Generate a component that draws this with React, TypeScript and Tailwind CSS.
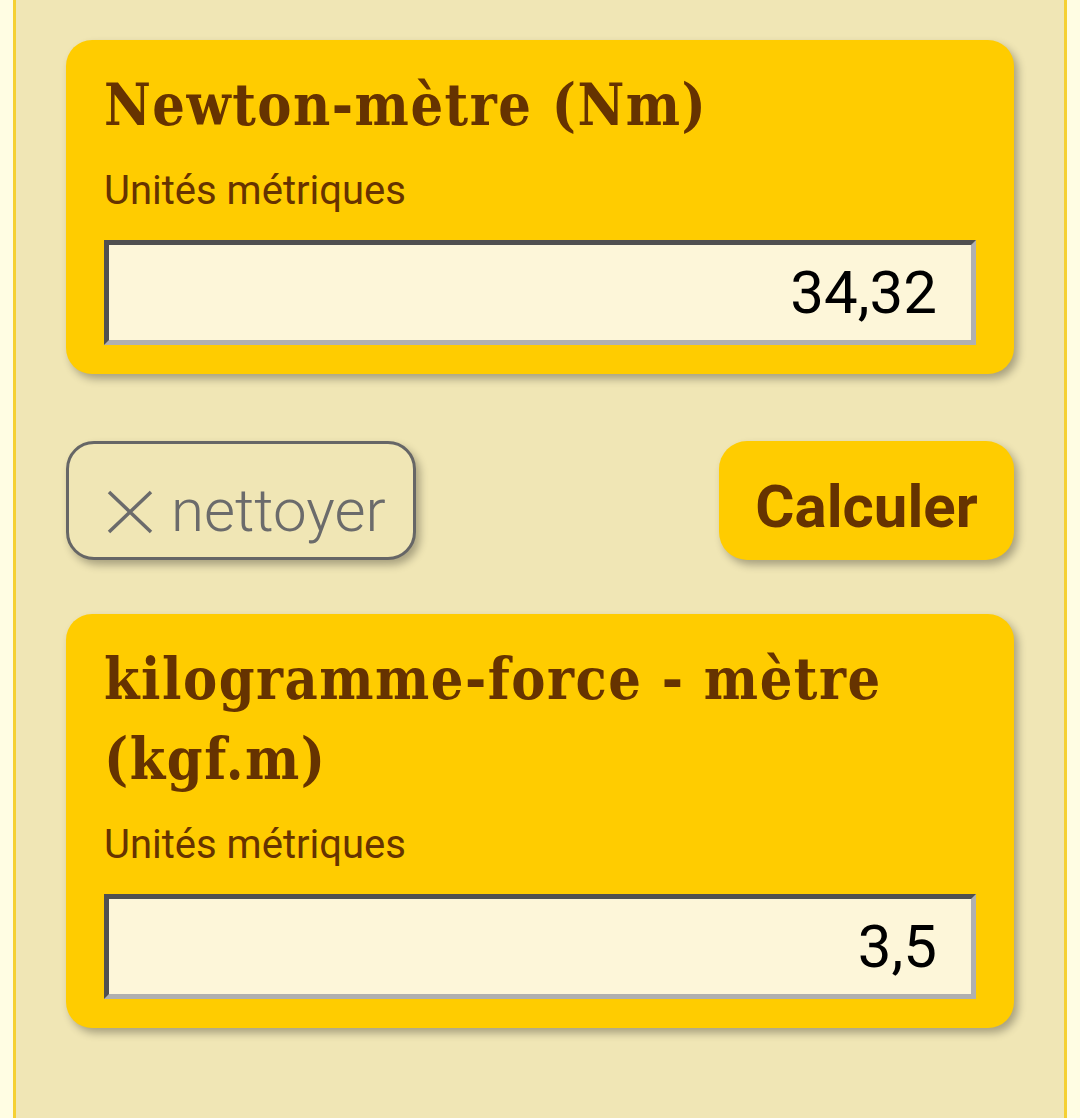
import React from "react";

const serif = { fontFamily: '"DejaVu Serif Condensed", "DejaVu Serif", serif' };
const roboto = { fontFamily: 'Roboto, "Liberation Sans", sans-serif' };

function Card({ title, value }: { title: React.ReactNode; value: string }) {
  return (
    <div className="rounded-[26px] bg-[#ffcc00] px-[38px] pt-[25px] pb-[29px] shadow-[4px_5px_8px_rgba(0,0,0,0.3)]">
      <h2 className="text-[57px] font-bold leading-[80px] tracking-[1.5px] text-[#663300]" style={serif}>
        {title}
      </h2>
      <div className="mt-[23px] text-[40px] leading-[46px] text-[#663300]" style={roboto}>
        Unités métriques
      </div>
      <div className="mt-[26px] flex h-[105px] items-center justify-end border-[5px] border-t-[#505050] border-l-[#505050] border-b-[#b0b0b0] border-r-[#b0b0b0] bg-[#fdf6d9] pr-[34px]">
        <span className="text-[60px] leading-none text-black" style={roboto}>
          {value}
        </span>
      </div>
    </div>
  );
}

export default function App() {
  return (
    <div className="min-h-[1118px] bg-[#fffde3]">
      <div className="ml-[13px] min-h-[1118px] w-[1054px] border-x-[3px] border-[#f5d033] bg-[#f0e6b5] px-[50px] pt-[40px]">
        <Card title="Newton-mètre (Nm)" value="34,32" />
        <div className="mt-[67px] flex items-center justify-between">
          <button className="flex h-[119px] w-[350px] items-center gap-[18px] rounded-[28px] border-[3px] border-[#666666] bg-[#f0e6b5] pl-[38px] pt-[20px] shadow-[4px_5px_8px_rgba(0,0,0,0.3)]">
            <svg width="46" height="44" viewBox="0 0 46 44" className="mt-[2px]">
              <path d="M2 2 L44 42 M44 2 L2 42" stroke="#6b6b6b" strokeWidth="3.5" fill="none" />
            </svg>
            <span className="text-[60px] font-light leading-none text-[#6b6b6b]" style={roboto}>
              nettoyer
            </span>
          </button>
          <button className="flex h-[119px] w-[295px] items-center justify-center rounded-[28px] bg-[#ffcc00] pt-[12px] shadow-[4px_5px_8px_rgba(0,0,0,0.3)]">
            <span className="text-[60px] font-bold leading-none text-[#663300]" style={roboto}>
              Calculer
            </span>
          </button>
        </div>
        <div className="mt-[54px]">
          <Card title="kilogramme-force - mètre (kgf.m)" value="3,5" />
        </div>
      </div>
    </div>
  );
}
